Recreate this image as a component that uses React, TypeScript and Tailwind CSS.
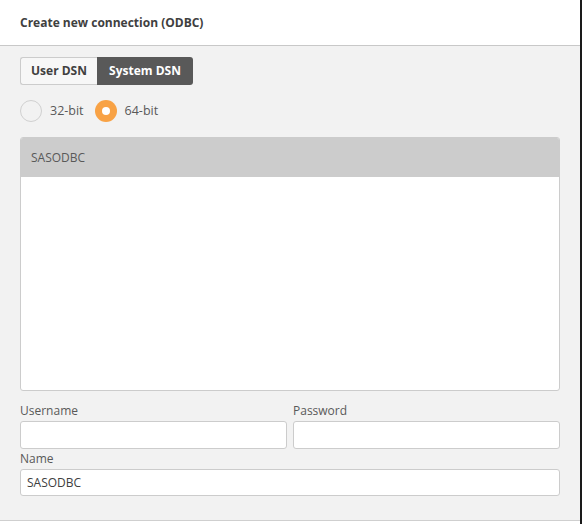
export default function App() {
  return (
    <div
      className="flex h-[524px] w-[582px] flex-col overflow-hidden bg-white text-[#404040]"
      style={{ fontFamily: '"Open Sans", "Noto Sans", sans-serif' }}
    >
      <div className="flex flex-1 flex-col border-r-2 border-[#1a1a1a]">
        {/* header */}
        <div className="flex h-[46px] items-center border-b border-[#c8c8c8] bg-white px-5">
          <h1 className="text-[12px] font-bold text-[#404040]">Create new connection (ODBC)</h1>
        </div>

        {/* body */}
        <div className="flex flex-1 flex-col border-b border-[#cfcfcf] bg-[#f2f2f2] px-5 pt-[11px]">
          <div className="flex h-[28px]">
            <button className="w-[77px] rounded-l-[3px] border border-r-0 border-[#cccccc] bg-[#f7f7f7] text-[12px] font-bold text-[#404040]">
              User DSN
            </button>
            <button className="w-[96px] rounded-r-[3px] bg-[#595959] text-[12px] font-bold text-white">
              System DSN
            </button>
          </div>

          <div className="mt-[15px] flex h-[22px] items-center text-[12.5px] text-[#595959]">
            <span className="h-[22px] w-[22px] rounded-full border border-[#d0d0d0] bg-[#f2f2f2]" />
            <span className="ml-2">32-bit</span>
            <span className="ml-[11px] flex h-[22px] w-[22px] items-center justify-center rounded-full bg-[#f8a245]">
              <span className="h-[8px] w-[8px] rounded-full bg-white" />
            </span>
            <span className="ml-2">64-bit</span>
          </div>

          <div className="mt-[15px] flex h-[254px] flex-col overflow-hidden rounded-[3px] border border-[#cccccc] bg-white">
            <div className="flex h-[39px] items-center bg-[#cccccc] px-[10px] text-[12px] text-[#595959]">
              SASODBC
            </div>
          </div>

          <div className="mt-[11px] flex gap-[6px]">
            <label className="flex flex-1 flex-col">
              <span className="h-[19px] text-[12px] text-[#595959]">Username</span>
              <input className="h-[28px] rounded-[3px] border border-[#cccccc] bg-white px-2 text-[12px] outline-none" />
            </label>
            <label className="flex flex-1 flex-col">
              <span className="h-[19px] text-[12px] text-[#595959]">Password</span>
              <input
                type="password"
                className="h-[28px] rounded-[3px] border border-[#cccccc] bg-white px-2 text-[12px] outline-none"
              />
            </label>
          </div>

          <label className="flex flex-col">
            <span className="h-[20px] text-[12px] leading-[19px] text-[#595959]">Name</span>
            <input
              defaultValue="SASODBC"
              className="h-[27px] rounded-[3px] border border-[#cccccc] bg-white px-[6px] text-[12px] text-[#404040] outline-none"
            />
          </label>
        </div>
        <div className="h-[3px] bg-white" />
      </div>
    </div>
  );
}
